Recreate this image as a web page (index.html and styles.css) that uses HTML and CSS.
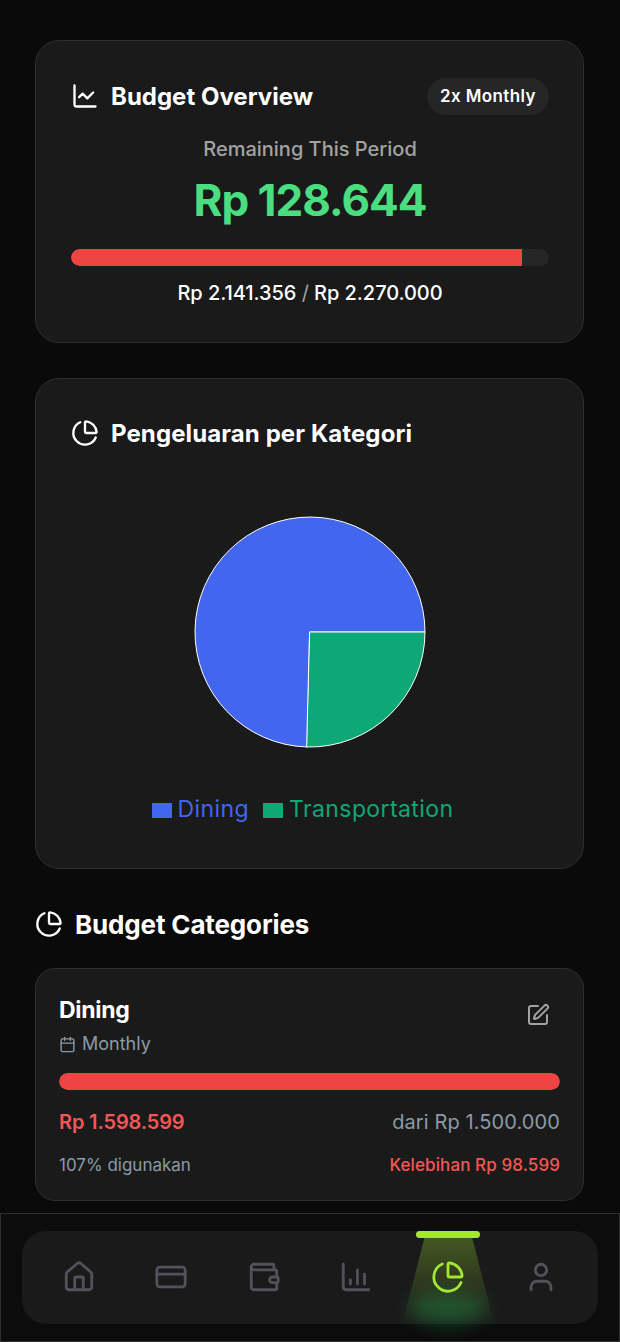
FILE: index.html
```html
<!DOCTYPE html>
<html lang="en">
<head>
  <meta charset="UTF-8">
  <meta name="viewport" content="width=device-width, initial-scale=1.0">
  <title>Budget</title>
  <link rel="stylesheet" href="styles.css">
</head>
<body>
  <main class="page">

    <section class="card overview">
      <div class="card-head">
        <h2 class="card-title">
          <svg class="title-icon" viewBox="0 0 24 24"><path d="M3 3v16a2 2 0 0 0 2 2h16"/><path d="m19 9-5 5-4-4-3 3"/></svg>
          Budget Overview
        </h2>
        <span class="pill">2x Monthly</span>
      </div>
      <p class="remaining-label">Remaining This Period</p>
      <p class="remaining-value">Rp 128.644</p>
      <div class="bar overview-bar"><div class="bar-fill" style="width: 94.3%"></div></div>
      <p class="totals">Rp 2.141.356 <span class="slash">/</span> Rp 2.270.000</p>
    </section>

    <section class="card chart-card">
      <h2 class="card-title">
        <svg class="title-icon" viewBox="0 0 24 24"><path d="M21 12c.552 0 1.005-.449.95-.998a10 10 0 0 0-8.953-8.951c-.55-.055-.998.398-.998.95v8a1 1 0 0 0 1 1z"/><path d="M21.21 15.89A10 10 0 1 1 8 2.83"/></svg>
        Pengeluaran per Kategori
      </h2>
      <div class="pie-wrap">
        <svg class="pie" width="232" height="232" viewBox="0 0 232 232">
          <path d="M116 116 L231 116 A115 115 0 1 0 113 231 Z" fill="#4366ee" stroke="#fff" stroke-width="1"/>
          <path d="M116 116 L231 116 A115 115 0 0 1 113 231 Z" fill="#0ea876" stroke="#fff" stroke-width="1"/>
        </svg>
      </div>
      <div class="legend">
        <span class="legend-item blue"><i class="swatch"></i>Dining</span>
        <span class="legend-item green"><i class="swatch"></i>Transportation</span>
      </div>
    </section>

    <h2 class="section-title">
      <svg class="title-icon" viewBox="0 0 24 24"><path d="M21 12c.552 0 1.005-.449.95-.998a10 10 0 0 0-8.953-8.951c-.55-.055-.998.398-.998.95v8a1 1 0 0 0 1 1z"/><path d="M21.21 15.89A10 10 0 1 1 8 2.83"/></svg>
      Budget Categories
    </h2>

    <section class="card category">
      <div class="category-head">
        <div>
          <h3 class="category-name">Dining</h3>
          <p class="category-period">
            <svg class="small-icon" viewBox="0 0 24 24"><path d="M8 2v4"/><path d="M16 2v4"/><rect x="3" y="4" width="18" height="18" rx="2"/><path d="M3 10h18"/></svg>
            Monthly
          </p>
        </div>
        <svg class="edit-icon" viewBox="0 0 24 24"><path d="M12 3H5a2 2 0 0 0-2 2v14a2 2 0 0 0 2 2h14a2 2 0 0 0 2-2v-7"/><path d="M18.375 2.625a1 1 0 0 1 3 3l-9.013 9.014a2 2 0 0 1-.853.505l-2.873.84a.5.5 0 0 1-.62-.62l.84-2.873a2 2 0 0 1 .506-.852z"/></svg>
      </div>
      <div class="bar category-bar"><div class="bar-fill full" style="width: 100%"></div></div>
      <div class="row amounts">
        <span class="spent">Rp 1.598.599</span>
        <span class="limit">dari Rp 1.500.000</span>
      </div>
      <div class="row notes">
        <span class="used">107% digunakan</span>
        <span class="over">Kelebihan Rp 98.599</span>
      </div>
    </section>

  </main>

  <nav class="bottom-nav">
    <div class="nav-inner">
      <a class="nav-item">
        <svg viewBox="0 0 24 24"><path d="M15 21v-8a1 1 0 0 0-1-1h-4a1 1 0 0 0-1 1v8"/><path d="M3 10a2 2 0 0 1 .709-1.528l7-5.999a2 2 0 0 1 2.582 0l7 5.999A2 2 0 0 1 21 10v9a2 2 0 0 1-2 2H5a2 2 0 0 1-2-2z"/></svg>
      </a>
      <a class="nav-item">
        <svg viewBox="0 0 24 24"><rect x="2" y="5" width="20" height="14" rx="2"/><path d="M2 10h20"/></svg>
      </a>
      <a class="nav-item">
        <svg viewBox="0 0 24 24"><path d="M19 7V4a1 1 0 0 0-1-1H5a2 2 0 0 0 0 4h15a1 1 0 0 1 1 1v4h-3a2 2 0 0 0 0 4h3a1 1 0 0 0 1-1v-2a1 1 0 0 0-1-1"/><path d="M3 5v14a2 2 0 0 0 2 2h15a1 1 0 0 0 1-1v-4"/></svg>
      </a>
      <a class="nav-item">
        <svg viewBox="0 0 24 24"><path d="M3 3v16a2 2 0 0 0 2 2h16"/><path d="M8 17v-3"/><path d="M13 17V7"/><path d="M18 17V10"/></svg>
      </a>
      <a class="nav-item active">
        <span class="nav-beam"></span>
        <span class="nav-glow"></span>
        <span class="nav-lamp"></span>
        <svg viewBox="0 0 24 24"><path d="M21 12c.552 0 1.005-.449.95-.998a10 10 0 0 0-8.953-8.951c-.55-.055-.998.398-.998.95v8a1 1 0 0 0 1 1z"/><path d="M21.21 15.89A10 10 0 1 1 8 2.83"/></svg>
      </a>
      <a class="nav-item">
        <svg viewBox="0 0 24 24"><path d="M19 21v-2a4 4 0 0 0-4-4H9a4 4 0 0 0-4 4v2"/><circle cx="12" cy="7" r="4"/></svg>
      </a>
    </div>
  </nav>
</body>
</html>
```

FILE: styles.css
```css
* {
  box-sizing: border-box;
}

html, body {
  margin: 0;
  height: 100%;
  overflow: hidden;
}

body {
  font-family: 'Inter', 'Liberation Sans', sans-serif;
  background-color: #0a0a0a;
  color: #fff;
}

h2, h3, p {
  margin: 0;
}

svg {
  fill: none;
  stroke: currentColor;
  stroke-linecap: round;
  stroke-linejoin: round;
  stroke-width: 2;
}

.page {
  padding: 40px 36px 0 35px;
}

.card {
  background-color: #1a1a1a;
  border: 1px solid #2e2e2e;
  border-radius: 24px;
}

.overview {
  height: 303px;
  padding: 36px 34px 0 35px;
}

.card-head {
  display: flex;
  justify-content: space-between;
  align-items: center;
  height: 38px;
}

.card-title, .section-title {
  display: flex;
  align-items: center;
  gap: 12px;
  font-size: 24px;
  font-weight: 700;
}

.title-icon {
  width: 28px;
  height: 28px;
  flex: none;
}

.pill {
  background-color: #262626;
  border-radius: 19px;
  height: 37px;
  padding: 0 13px;
  display: flex;
  align-items: center;
  font-size: 17px;
  font-weight: 600;
  letter-spacing: 0.4px;
}

.remaining-label {
  margin-top: 22px;
  text-align: center;
  font-size: 20px;
  line-height: 24px;
  font-weight: 500;
  color: #a3a3a3;
}

.remaining-value {
  margin-top: 11px;
  text-align: center;
  font-size: 44px;
  line-height: 56px;
  font-weight: 700;
  letter-spacing: -1px;
  color: #4ade80;
}

.bar {
  background-color: #262626;
  border-radius: 9px;
  overflow: hidden;
  height: 17px;
}

.bar-fill {
  height: 100%;
  background-color: #ef4444;
  border-radius: 9px 0 0 9px;
}

.bar-fill.full {
  border-radius: 9px;
}

.overview-bar {
  margin-top: 21px;
}

.totals {
  margin-top: 15px;
  text-align: center;
  font-size: 20px;
  font-weight: 500;
  letter-spacing: -0.05px;
}

.slash {
  color: #a3a3a3;
  font-weight: 400;
}

.chart-card {
  height: 491px;
  margin-top: 35px;
  padding: 35px 35px 0;
}

.chart-card .card-title {
  height: 38px;
  letter-spacing: 0.1px;
}

.pie-wrap {
  display: flex;
  justify-content: center;
  margin-top: 64px;
}

.legend {
  display: flex;
  justify-content: center;
  align-items: center;
  gap: 14px;
  margin: 47px 14px 0 0;
  font-size: 23px;
  letter-spacing: 0.4px;
}

.legend-item {
  display: flex;
  align-items: center;
  gap: 6px;
}

.swatch {
  width: 20px;
  height: 15px;
  margin-top: 3px;
}

.blue { color: #4366ee; }
.blue .swatch { background-color: #4366ee; }
.green { color: #0ea876; }
.green .swatch { background-color: #0ea876; }

.section-title {
  margin-top: 38px;
  height: 34px;
  font-size: 26px;
  letter-spacing: -0.15px;
}

.category {
  height: 233px;
  margin-top: 27px;
  padding: 27px 23px 0;
  border-radius: 20px;
}

.category-head {
  display: flex;
  justify-content: space-between;
}

.category-name {
  font-size: 23px;
  font-weight: 700;
  letter-spacing: -0.3px;
  line-height: 28px;
}

.category-period {
  display: flex;
  align-items: center;
  gap: 6px;
  margin-top: 9px;
  font-size: 18px;
  line-height: 22px;
  color: #8a9aa8;
}

.small-icon {
  width: 17px;
  height: 17px;
}

.edit-icon {
  width: 24px;
  height: 24px;
  margin: 7px 10px 0 0;
  color: #a3a3a3;
}

.category-bar {
  margin-top: 18px;
}

.row {
  display: flex;
  justify-content: space-between;
  align-items: center;
}

.amounts {
  margin-top: 20px;
  font-size: 20px;
  line-height: 24px;
}

.spent {
  color: #f55656;
  font-weight: 600;
  letter-spacing: -0.15px;
}

.limit {
  color: #8a9aa8;
  letter-spacing: 0.1px;
}

.notes {
  margin-top: 21px;
  font-size: 17px;
  line-height: 21px;
}

.used {
  color: #8a9aa8;
}

.over {
  color: #f55656;
  font-weight: 500;
  letter-spacing: 0.1px;
}

.bottom-nav {
  position: fixed;
  left: 0;
  right: 0;
  top: 1213px;
  height: 129px;
  padding: 17px 21px 0;
  background-color: #0c0c0c;
  border: 1px solid #2e2e2e;
}

.nav-inner {
  display: flex;
  height: 93px;
  padding: 0 11px;
  background-color: #1a1a1a;
  border-radius: 24px;
}

.nav-item {
  position: relative;
  flex: 1;
  display: flex;
  justify-content: center;
  align-items: center;
  color: #52525b;
}

.nav-item svg {
  position: relative;
  width: 34px;
  height: 34px;
  margin-top: -1px;
}

.nav-item.active {
  color: #a3e635;
}

.nav-lamp {
  position: absolute;
  top: 0;
  left: 14px;
  width: 64px;
  height: 7px;
  border-radius: 4px;
  background-color: #a3e635;
}

.nav-beam {
  position: absolute;
  top: 7px;
  left: 0;
  width: 92px;
  height: 86px;
  clip-path: polygon(24% 0, 76% 0, 100% 100%, 0 100%);
  background: linear-gradient(to bottom, rgba(163, 230, 53, 0.3), rgba(163, 230, 53, 0));
}

.nav-glow {
  position: absolute;
  left: 8px;
  bottom: 0;
  width: 76px;
  height: 30px;
  border-radius: 50%;
  background-color: rgba(34, 197, 94, 0.32);
  filter: blur(10px);
}
```
